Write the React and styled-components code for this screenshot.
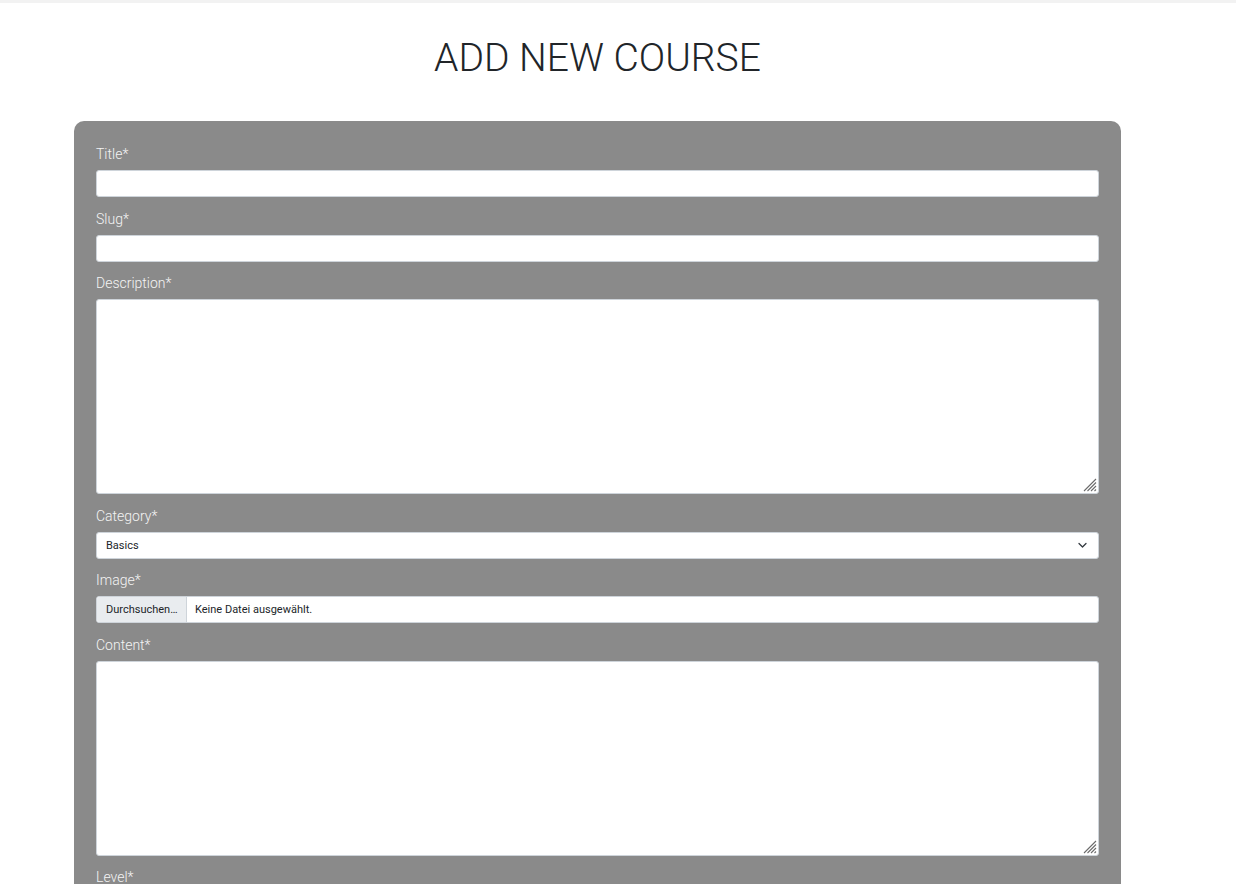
import React from "react";
import styled, { createGlobalStyle } from "styled-components";

const Global = createGlobalStyle`
  html, body { margin: 0; padding: 0; background: #fff; }
  body { font-family: Roboto, "Noto Sans", Arial, sans-serif; color: #212529; }
  * { box-sizing: border-box; }
`;

const TopStrip = styled.div`
  height: 3px;
  background: #f2f2f2;
`;

const Page = styled.main`
  width: 1047px;
  margin-left: 74px;
  padding-top: 31px;
  padding-bottom: 40px;
`;

const Heading = styled.h1`
  margin: 0 0 39px;
  font-family: Roboto, sans-serif;
  font-weight: 300;
  font-size: 39px;
  line-height: 48px;
  text-align: center;
  color: #212529;
`;

const Panel = styled.form`
  background: #8a8a8a;
  border-radius: 10px;
  padding: 23px 22px 24px;
  display: flex;
  flex-direction: column;
`;

const Field = styled.div`
  display: flex;
  flex-direction: column;
  margin-bottom: 11.5px;
`;

const Label = styled.label`
  font-family: Roboto, sans-serif;
  font-weight: 300;
  font-size: 14px;
  line-height: 21px;
  color: #f4f4f4;
  margin-bottom: 5px;
`;

const TextInput = styled.input`
  height: 27px;
  width: 100%;
  border: 1px solid #ced4da;
  border-radius: 3px;
  background: #fff;
  font-family: Roboto, sans-serif;
  font-size: 11px;
  padding: 0 9px;
  outline: none;
`;

const AreaWrap = styled.div`
  position: relative;
  width: 100%;
`;

const TextArea = styled.textarea`
  display: block;
  height: 195px;
  width: 100%;
  border: 1px solid #ced4da;
  border-radius: 3px;
  background: #fff;
  font-family: Roboto, sans-serif;
  font-size: 11px;
  padding: 6px 9px;
  resize: none;
  outline: none;
`;

const Grip = styled.svg`
  position: absolute;
  right: 2px;
  bottom: 2px;
  width: 14px;
  height: 14px;
  pointer-events: none;
`;

const SelectWrap = styled.div`
  position: relative;
  width: 100%;
`;

const Select = styled.select`
  appearance: none;
  -webkit-appearance: none;
  display: block;
  height: 27px;
  width: 100%;
  border: 1px solid #ced4da;
  border-radius: 3px;
  background: #fff;
  font-family: Roboto, sans-serif;
  font-size: 11px;
  color: #212529;
  padding: 0 9px;
  outline: none;
`;

const Chevron = styled.svg`
  position: absolute;
  right: 12px;
  top: 10px;
  width: 9px;
  height: 7px;
  pointer-events: none;
`;

const FileBox = styled.div`
  display: flex;
  height: 27px;
  width: 100%;
  border: 1px solid #ced4da;
  border-radius: 3px;
  background: #fff;
  overflow: hidden;
  font-family: Roboto, sans-serif;
  font-size: 11px;
  color: #212529;
`;

const FileButton = styled.span`
  display: flex;
  align-items: center;
  width: 90px;
  padding-left: 9px;
  background: #e9ecef;
  border-right: 1px solid #ced4da;
  white-space: nowrap;
`;

const FileName = styled.span`
  display: flex;
  align-items: center;
  padding-left: 8px;
`;

function Chev() {
  return (
    <Chevron viewBox="0 0 9 7" fill="none">
      <path d="M1 1.5 L4.5 5 L8 1.5" stroke="#343a40" strokeWidth="1.3" strokeLinecap="round" strokeLinejoin="round" />
    </Chevron>
  );
}

function Area() {
  return (
    <AreaWrap>
      <TextArea />
      <Grip viewBox="0 0 14 14" fill="none">
        <g stroke="#6b6b6b" strokeWidth="1.1">
          <line x1="13" y1="1" x2="1" y2="13" />
          <line x1="13" y1="4.5" x2="4.5" y2="13" />
          <line x1="13" y1="8" x2="8" y2="13" />
          <line x1="13" y1="11.5" x2="11.5" y2="13" />
        </g>
      </Grip>
    </AreaWrap>
  );
}

export default function App() {
  return (
    <>
      <Global />
      <TopStrip />
      <Page>
        <Heading>ADD NEW COURSE</Heading>
        <Panel onSubmit={(e) => e.preventDefault()}>
          <Field>
            <Label>Title*</Label>
            <TextInput type="text" />
          </Field>
          <Field>
            <Label>Slug*</Label>
            <TextInput type="text" />
          </Field>
          <Field>
            <Label>Description*</Label>
            <Area />
          </Field>
          <Field>
            <Label>Category*</Label>
            <SelectWrap>
              <Select defaultValue="basics">
                <option value="basics">Basics</option>
                <option value="advanced">Advanced</option>
              </Select>
              <Chev />
            </SelectWrap>
          </Field>
          <Field>
            <Label>Image*</Label>
            <FileBox>
              <FileButton>Durchsuchen…</FileButton>
              <FileName>Keine Datei ausgewählt.</FileName>
            </FileBox>
          </Field>
          <Field>
            <Label>Content*</Label>
            <Area />
          </Field>
          <Field>
            <Label>Level*</Label>
            <SelectWrap>
              <Select defaultValue="beginner">
                <option value="beginner">Beginner</option>
                <option value="intermediate">Intermediate</option>
              </Select>
              <Chev />
            </SelectWrap>
          </Field>
        </Panel>
      </Page>
    </>
  );
}
